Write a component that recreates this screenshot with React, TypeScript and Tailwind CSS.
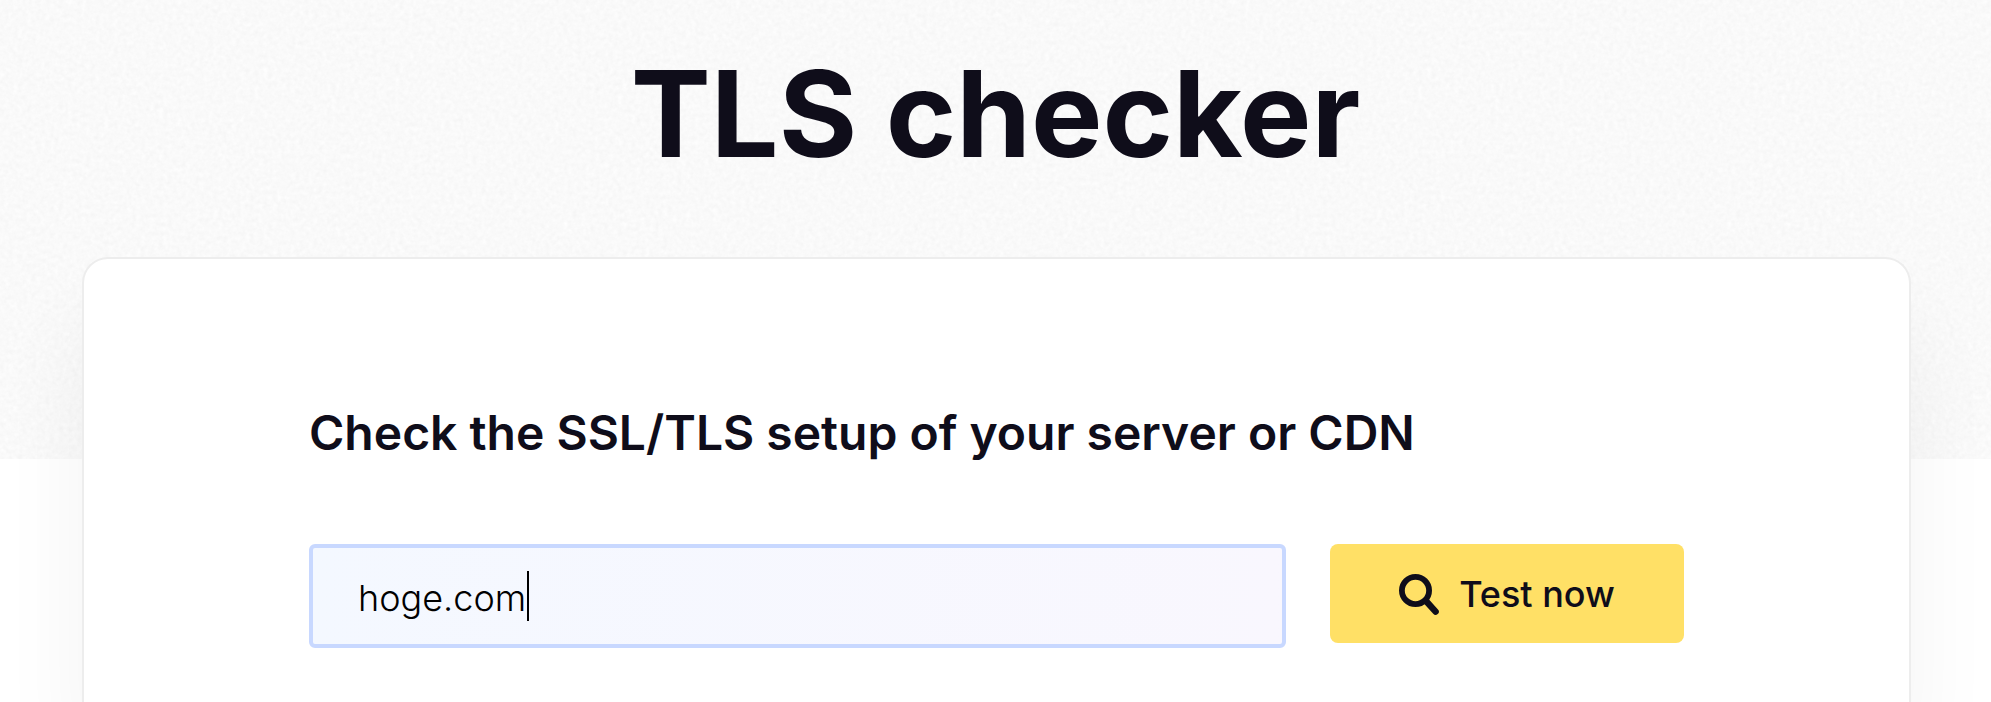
import { useState } from 'react';

function PaperTexture() {
  return (
    <svg className="absolute inset-0 w-full h-full" aria-hidden="true">
      <filter id="paper" x="0" y="0" width="100%" height="100%" colorInterpolationFilters="sRGB">
        <feTurbulence type="fractalNoise" baseFrequency="0.22" numOctaves="3" seed="4" />
        <feColorMatrix
          type="matrix"
          values="0.028 0.028 0 0 0.95
                  0.028 0.028 0 0 0.95
                  0.028 0.028 0 0 0.95
                  0 0 0 0 1"
        />
      </filter>
      <rect width="100%" height="100%" filter="url(#paper)" />
    </svg>
  );
}

function SearchIcon() {
  return (
    <svg className="w-10 h-[41px] shrink-0" viewBox="0 0 40 41" fill="none" stroke="currentColor" aria-hidden="true">
      <circle cx="16.5" cy="16.5" r="13.6" strokeWidth="5.8" />
      <path d="M27 27 L36.6 37.6" strokeWidth="6.4" strokeLinecap="round" />
    </svg>
  );
}

export default function App() {
  const [host, setHost] = useState('hoge.com');

  return (
    <div className="min-h-screen flex flex-col overflow-hidden bg-white font-['Inter',sans-serif] text-[#0f0d1a]">
      {/* Hero */}
      <header className="relative bg-[#f9f9f9] pt-[54px] pb-[285px] text-center">
        <PaperTexture />
        <h1 className="relative text-[120px] leading-[120px] font-bold">TLS checker</h1>
      </header>

      {/* Card */}
      <main className="relative flex-1 -mt-[202px] ml-[82px] mr-20 px-[225px] pt-[142px] pb-[54px] bg-white border-2 border-b-0 border-[#ededed] rounded-t-[26px] shadow-[0_64px_90px_rgba(0,0,0,0.05)]">
        <h2 className="text-[48px] leading-[64px] font-semibold">
          Check the SSL/TLS setup of your server or CDN
        </h2>

        <form className="flex items-start gap-11 mt-[79px]" onSubmit={(e) => e.preventDefault()}>
          <div className="relative flex-1">
            <input
              type="text"
              aria-label="Hostname"
              className="block w-full h-[104px] px-[45px] pt-1 text-[36px] font-light text-black caret-transparent bg-linear-to-r from-[#f4f8ff] to-[#f9f7fe] border-4 border-[#c8d8ff] rounded-md outline-none"
              value={host}
              onChange={(e) => setHost(e.target.value)}
            />
            {/* Caret follows the typed text */}
            <div className="absolute inset-y-0 left-[50px] flex items-center pointer-events-none text-[36px] font-light" aria-hidden="true">
              <span className="border-r-2 border-black h-[50px] text-transparent whitespace-pre">{host}</span>
            </div>
          </div>

          <button
            type="submit"
            className="flex items-center justify-center gap-5 w-[354px] h-[99px] pt-px bg-[#ffe066] rounded-lg text-[36px] font-medium"
          >
            <SearchIcon />
            Test now
          </button>
        </form>
      </main>
    </div>
  );
}
